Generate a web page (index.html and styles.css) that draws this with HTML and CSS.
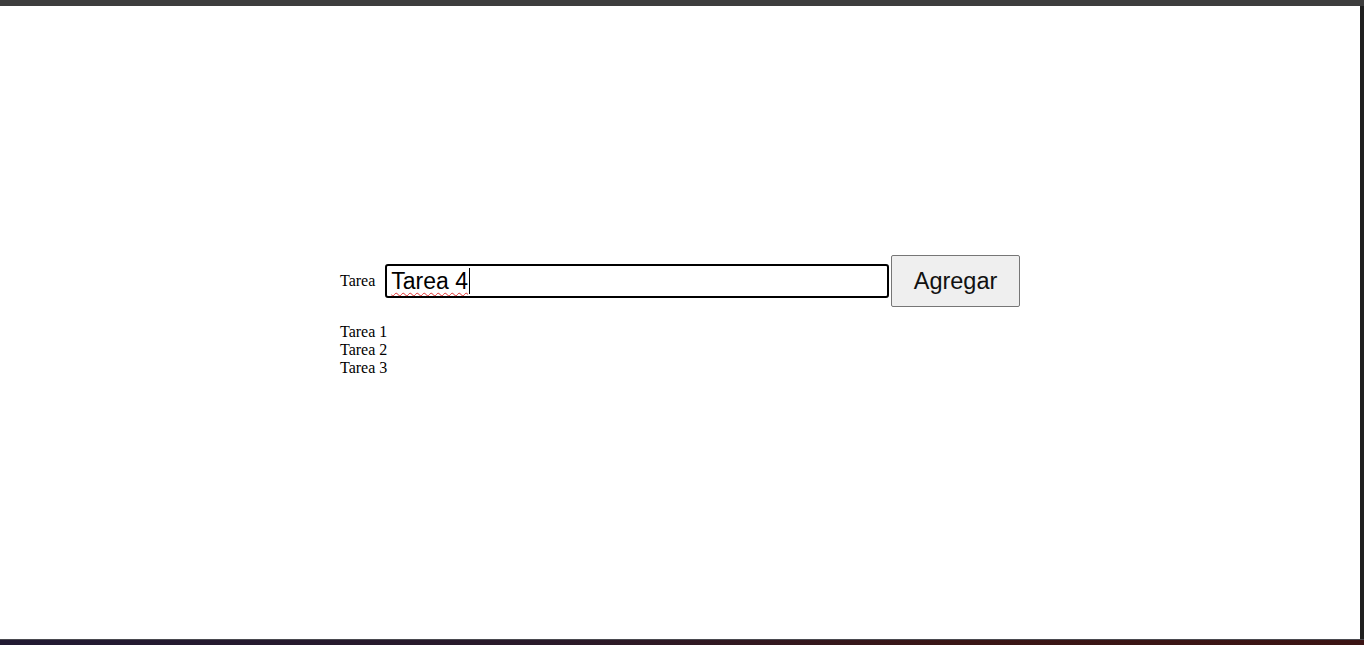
FILE: index.html
```html
<!DOCTYPE html>
<html lang="es">
<head>
<meta charset="utf-8">
<title>Tareas</title>
<link rel="stylesheet" href="styles.css">
</head>
<body>
<div class="frame">
  <div class="top-bar"></div>
  <div class="middle">
    <main class="page">
      <div class="app">
        <form class="task-form">
          <label class="label" for="task">Tarea</label>
          <div class="input-box"><span class="input-text">Tarea 4</span><span class="caret"></span></div>
          <button type="button" class="add-btn">Agregar</button>
        </form>
        <ul class="list">
          <li>Tarea 1</li>
          <li>Tarea 2</li>
          <li>Tarea 3</li>
        </ul>
      </div>
    </main>
    <div class="right-bar"></div>
  </div>
  <div class="bottom-bar"></div>
</div>
</body>
</html>
```

FILE: styles.css
```css
html, body {
  margin: 0;
  padding: 0;
  width: 1364px;
  height: 645px;
  overflow: hidden;
  background: #ffffff;
}

.frame {
  display: flex;
  flex-direction: column;
  width: 1364px;
  height: 645px;
}

.top-bar {
  height: 6px;
  background: #3d3d3d;
  flex: none;
}

.middle {
  flex: 1;
  display: flex;
}

.page {
  flex: 1;
  background: #ffffff;
  display: flex;
  justify-content: center;
  padding-top: 249px;
}

.right-bar {
  width: 4px;
  background: #1f1f1f;
}

.bottom-bar {
  height: 5px;
  flex: none;
  background: linear-gradient(90deg, #221a33 0%, #2a1a2a 40%, #3a1616 70%, #3b1414 100%);
  border-top: 1px solid #4a4a50;
}

.app {
  width: 680px;
  font-family: "Liberation Serif", "Times New Roman", serif;
  color: #000;
}

.task-form {
  display: flex;
  align-items: center;
  margin: 0;
}

.label {
  font-size: 16px;
  margin-right: 10px;
}

.input-box {
  box-sizing: border-box;
  width: 504px;
  height: 34px;
  border: 2px solid #000;
  border-radius: 3px;
  display: flex;
  align-items: center;
  padding-left: 4px;
  font-family: "Liberation Sans", Arial, sans-serif;
  font-size: 23px;
  color: #000;
  margin-right: 2px;
}

.input-text {
  text-decoration: underline wavy #e03030;
  text-decoration-thickness: 1px;
  text-underline-offset: 3px;
}

.caret {
  width: 1px;
  height: 26px;
  background: #000;
  margin-left: 1px;
}

.add-btn {
  box-sizing: border-box;
  width: 129px;
  height: 52px;
  background: #efefef;
  border: 1px solid #767676;
  border-radius: 2px;
  font-family: "Liberation Sans", Arial, sans-serif;
  font-size: 23.5px;
  color: #111;
  padding: 0;
}

.list {
  list-style: none;
  margin: 16px 0 0 0;
  padding: 0;
  font-size: 16px;
  line-height: 18px;
}
```
